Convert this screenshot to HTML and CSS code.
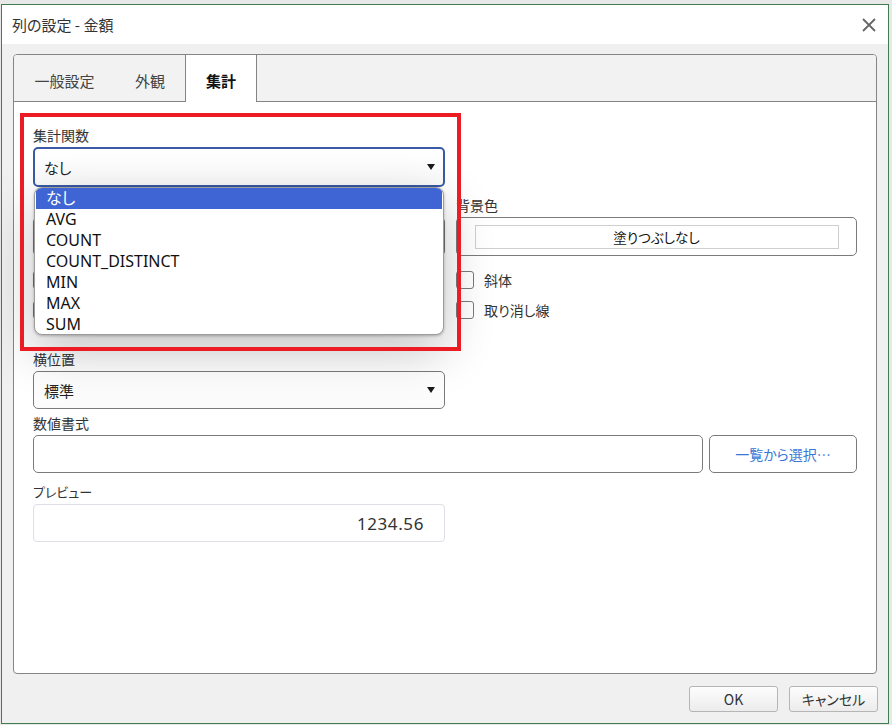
FILE: index.html
```html
<!DOCTYPE html>
<html lang="ja">
<head>
<meta charset="utf-8">
<title>列の設定 - 金額</title>
<link rel="stylesheet" href="styles.css">
</head>
<body>
<div class="window">
  <div class="titlebar">
    <span class="title">列の設定 - 金額</span>
    <span class="close" aria-label="閉じる">
      <svg width="14" height="14" viewBox="0 0 14 14"><path d="M1 1L13 13M13 1L1 13" stroke="#666" stroke-width="1.8" fill="none"/></svg>
    </span>
  </div>
  <div class="body">
    <div class="tabpanel">
      <div class="tabs">
        <div class="tab tab-general">一般設定</div>
        <div class="tab tab-look">外観</div>
        <div class="tab tab-agg active">集計</div>
      </div>
      <div class="content">
        <div class="lbl">集計関数</div>
        <div class="select focused"><span>なし</span><span class="caret"></span></div>

        <div class="grid2">
          <div class="col">
            <div class="lbl lbl-blank"></div>
            <div class="colorbtn"><div class="swatch"></div></div>
            <div class="check first"><span class="box"></span></div>
            <div class="check"><span class="box"></span></div>
          </div>
          <div class="col">
            <div class="lbl">背景色</div>
            <div class="colorbtn"><div class="swatch">塗りつぶしなし</div></div>
            <div class="check first"><span class="box"></span><span>斜体</span></div>
            <div class="check"><span class="box"></span><span>取り消し線</span></div>
          </div>
        </div>

        <div class="lbl lbl-align">横位置</div>
        <div class="select"><span>標準</span><span class="caret"></span></div>

        <div class="lbl lbl-format">数値書式</div>
        <div class="formatrow">
          <div class="textinput"></div>
          <div class="pickbtn">一覧から選択…</div>
        </div>

        <div class="lbl lbl-preview">プレビュー</div>
        <div class="preview">1234.56</div>

        <div class="dropdown">
          <div class="opt selected">なし</div>
          <div class="opt">AVG</div>
          <div class="opt">COUNT</div>
          <div class="opt">COUNT_DISTINCT</div>
          <div class="opt">MIN</div>
          <div class="opt">MAX</div>
          <div class="opt">SUM</div>
        </div>
        <div class="redmark"></div>
      </div>
    </div>
    <div class="footer">
      <div class="btn">OK</div>
      <div class="btn">キャンセル</div>
    </div>
  </div>
</div>
</body>
</html>
```

FILE: styles.css
```css
* { box-sizing: border-box; }
html, body { margin: 0; padding: 0; }
body {
  background: #e8e8e8;
  font-family: "Noto Sans CJK JP", "Noto Sans", sans-serif;
  font-feature-settings: "palt";
  color: #333;
}
.window {
  margin: 4px 0 0 1px;
  width: 888px;
  height: 720px;
  border: 1px solid #3f7d50;
  background: #f0f0f0;
  display: flex;
  flex-direction: column;
}
.titlebar {
  height: 39px;
  background: #fff;
  display: flex;
  align-items: center;
  justify-content: space-between;
  padding: 0 12px 0 10px;
}
.title { font-size: 15px; line-height: 20px; color: #333; }
.close { width: 14px; height: 14px; display: flex; }
.body {
  flex: 1;
  padding: 10px 10px 0 11px;
  display: flex;
  flex-direction: column;
}
.tabpanel {
  width: 864px;
  height: 620px;
  border: 1px solid #858585;
  border-radius: 4px;
  background: #fff;
  display: flex;
  flex-direction: column;
}
.tabs {
  height: 47px;
  display: flex;
  background: #f2f2f2;
  border-bottom: 1px solid #858585;
  border-radius: 3px 3px 0 0;
}
.tab {
  height: 46px;
  display: flex;
  align-items: center;
  justify-content: center;
  padding-top: 5px;
  font-size: 15px;
  line-height: 20px;
  color: #444;
}
.tab-general { width: 101px; }
.tab-look { width: 70px; }
.tab-agg { width: 72px; }
.tab.active {
  height: 47px;
  background: #fff;
  border-left: 1px solid #858585;
  border-right: 1px solid #858585;
  color: #111;
  font-weight: bold;
}
.content {
  position: relative;
  flex: 1;
  padding: 25px 19px 0;
  border-radius: 0 0 3px 3px;
}
.lbl {
  font-size: 14px;
  line-height: 16px;
  margin-bottom: 4px;
  color: #333;
}
.lbl-blank { height: 16px; }
.select {
  width: 412px;
  height: 38px;
  border: 1px solid #7a7a7a;
  border-radius: 5px;
  background: linear-gradient(#fff, #fbfbfb);
  display: flex;
  align-items: center;
  justify-content: space-between;
  padding: 0 9px 0 10px;
  font-size: 15px;
  color: #222;
}
.select.focused {
  height: 40px;
  border: 2px solid #3a5aa6;
  padding: 0 8px 0 9px;
}
.caret {
  width: 0;
  height: 0;
  border-left: 4px solid transparent;
  border-right: 4px solid transparent;
  border-top: 6px solid #1a1a1a;
}
.grid2 {
  margin-top: 10px;
  display: grid;
  grid-template-columns: 412px 401px;
  column-gap: 11px;
}
.colorbtn {
  height: 39px;
  border: 1px solid #7a7a7a;
  border-radius: 5px;
  display: flex;
  align-items: center;
  justify-content: center;
}
.swatch {
  width: 364px;
  height: 24px;
  border: 1px solid #cfcfcf;
  display: flex;
  align-items: center;
  justify-content: center;
  font-size: 13.5px;
  color: #111;
}
.check {
  height: 20px;
  margin-top: 10px;
  display: flex;
  align-items: center;
  gap: 10px;
  font-size: 14px;
  color: #333;
}
.check.first { margin-top: 14px; }
.box {
  width: 18px;
  height: 18px;
  border: 1px solid #7a7a7a;
  border-radius: 3px;
  background: #fff;
}
.lbl-align { margin-top: 31px; }
.lbl-format { margin-top: 6px; }
.lbl-preview { margin-top: 11px; font-size: 13px; }
.formatrow {
  display: flex;
  gap: 6px;
}
.textinput {
  width: 670px;
  height: 38px;
  border: 1px solid #7a7a7a;
  border-radius: 5px;
}
.pickbtn {
  width: 148px;
  height: 38px;
  border: 1px solid #7a7a7a;
  border-radius: 5px;
  display: flex;
  align-items: center;
  justify-content: center;
  font-size: 14px;
  color: #3a78d6;
}
.preview {
  width: 412px;
  height: 38px;
  border: 1px solid #dcdfe6;
  border-radius: 4px;
  display: flex;
  align-items: center;
  justify-content: flex-end;
  padding-right: 20px;
  font-family: "Noto Sans", sans-serif;
  font-size: 17px;
  letter-spacing: 0.6px;
  color: #333;
}
.dropdown {
  position: absolute;
  left: 20px;
  top: 85px;
  width: 410px;
  height: 148px;
  border: 1px solid #9c9c9c;
  border-radius: 8px;
  background: #fff;
  padding: 0 1px;
  box-shadow: 0 16px 50px rgba(0, 0, 0, 0.24), 0 1px 3px rgba(0, 0, 0, 0.25);
  overflow: hidden;
}
.opt {
  height: 21px;
  line-height: 21px;
  padding-left: 10px;
  font-family: "Noto Sans", "Noto Sans CJK JP", sans-serif;
  font-size: 16px;
  color: #111;
}
.opt.selected {
  background: #3e65d3;
  color: #fff;
}
.redmark {
  position: absolute;
  left: 6px;
  top: 11px;
  width: 441px;
  height: 238px;
  border: 4px solid #ec1c24;
}
.footer {
  display: flex;
  justify-content: flex-end;
  gap: 11px;
  padding-top: 12px;
}
.btn {
  width: 89px;
  height: 26px;
  border: 1px solid #b5b5b5;
  border-radius: 3px;
  background: linear-gradient(#fdfdfd, #ececec);
  display: flex;
  align-items: center;
  justify-content: center;
  font-size: 14px;
  color: #333;
}
```
